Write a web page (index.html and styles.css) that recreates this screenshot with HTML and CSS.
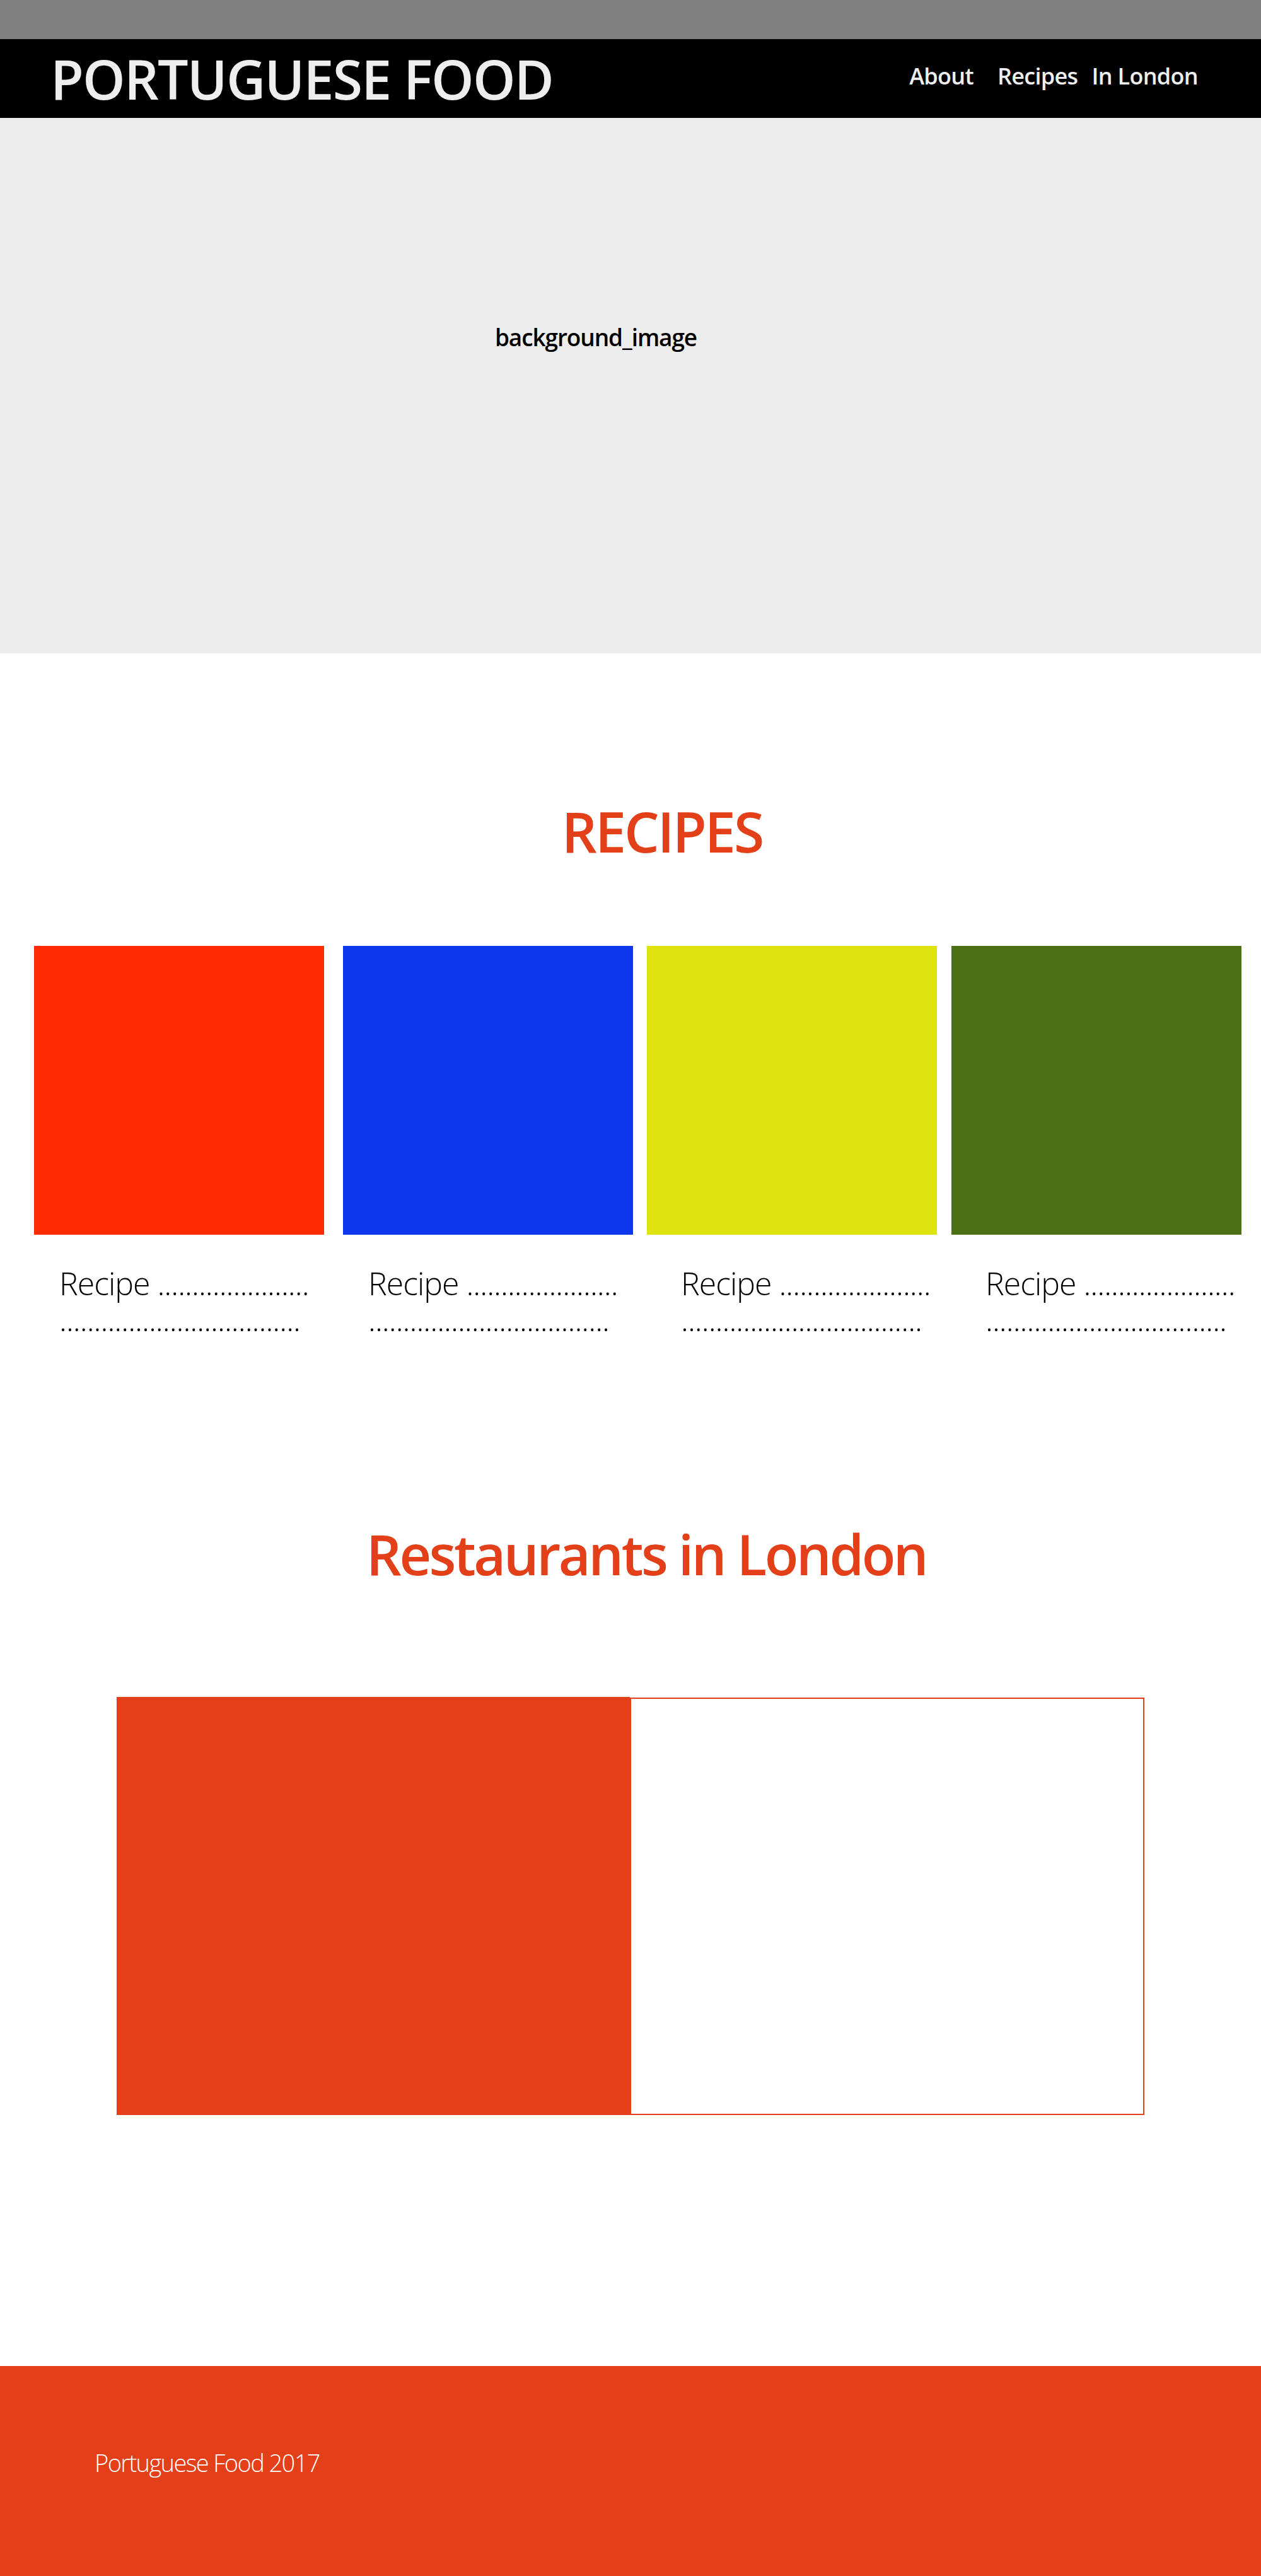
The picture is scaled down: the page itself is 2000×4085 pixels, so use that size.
FILE: index.html
```html
<!DOCTYPE html>
<html lang="en">
<head>
<meta charset="utf-8">
<title>Portuguese Food</title>
<link rel="stylesheet" href="styles.css">
</head>
<body>
<div class="topbar"></div>
<header class="header">
  <h1 class="logo">PORTUGUESE FOOD</h1>
  <nav class="nav">
    <a class="nav-link nav-about" href="#about">About</a>
    <a class="nav-link nav-recipes" href="#recipes">Recipes</a>
    <a class="nav-link nav-london" href="#london">In London</a>
  </nav>
</header>
<section class="hero" id="about">
  <p class="hero-text">background_image</p>
</section>
<section class="recipes" id="recipes">
  <h2 class="section-title recipes-title">RECIPES</h2>
  <div class="cards">
    <div class="card">
      <div class="swatch swatch-red"></div>
      <p class="card-text">Recipe ......................<br>...................................</p>
    </div>
    <div class="card">
      <div class="swatch swatch-blue"></div>
      <p class="card-text">Recipe ......................<br>...................................</p>
    </div>
    <div class="card">
      <div class="swatch swatch-yellow"></div>
      <p class="card-text">Recipe ......................<br>...................................</p>
    </div>
    <div class="card">
      <div class="swatch swatch-green"></div>
      <p class="card-text">Recipe ......................<br>...................................</p>
    </div>
  </div>
</section>
<section class="london" id="london">
  <h2 class="section-title london-title">Restaurants in London</h2>
  <div class="restaurant">
    <div class="restaurant-fill"></div>
    <div class="restaurant-panel"></div>
  </div>
</section>
<footer class="footer">
  <p class="footer-text">Portuguese Food 2017</p>
</footer>
</body>
</html>
```
FILE: styles.css
```css
* { box-sizing: border-box; }
html, body { margin: 0; padding: 0; }
body {
  font-family: "Open Sans", "Noto Sans", sans-serif;
  background: #ffffff;
  width: 2000px;
}
.topbar {
  height: 62px;
  background: #808080;
}
.header {
  height: 125px;
  background: #000000;
  display: flex;
  align-items: center;
  justify-content: space-between;
  padding: 0 100px 0 80px;
}
.logo {
  margin: 0;
  font-size: 86px;
  line-height: 1;
  font-weight: 600;
  color: #eeeeee;
  letter-spacing: -1.8px;
}
.nav {
  display: flex;
  padding-bottom: 7px;
}
.nav-link {
  font-size: 36px;
  line-height: 1;
  font-weight: 600;
  color: #eeeeee;
  text-decoration: none;
  letter-spacing: -0.7px;
}
.nav-recipes { margin-left: 38px; }
.nav-london { margin-left: 22px; }
.hero {
  height: 849px;
  background: #ededed;
  padding: 329px 110px 0 0;
  text-align: center;
}
.hero-text {
  margin: 0;
  font-size: 37px;
  line-height: 1;
  font-weight: 600;
  color: #000000;
  letter-spacing: -1.1px;
}
.recipes {
  padding-top: 238px;
}
.section-title {
  margin: 0;
  font-size: 88px;
  line-height: 1;
  font-weight: 600;
  color: #e33f18;
  text-align: center;
  letter-spacing: -3px;
}
.recipes-title { padding-left: 100px; }
.london-title { padding-left: 50px; letter-spacing: -3.5px; }
.cards {
  display: flex;
  margin-top: 138px;
  padding-left: 54px;
}
.card { width: 460px; }
.card:nth-child(2) { margin-left: 30px; }
.card:nth-child(3) { margin-left: 22px; }
.card:nth-child(4) { margin-left: 23px; }
.swatch { height: 458px; }
.swatch-red { background: #ff2a00; }
.swatch-blue { background: #0d36ed; }
.swatch-yellow { background: #dee20e; }
.swatch-green { background: #4b7114; }
.card-text {
  margin: 49px 0 0;
  font-size: 50px;
  line-height: 57px;
  font-weight: 300;
  color: #000000;
  letter-spacing: -1px;
  white-space: nowrap;
  padding-left: 40px;
}
.card:nth-child(3) .card-text,
.card:nth-child(4) .card-text { padding-left: 54px; }
.london {
  padding-top: 299px;
}
.restaurant {
  display: flex;
  margin: 183px 0 0 185px;
  width: 1630px;
  height: 663px;
}
.restaurant-fill {
  width: 814px;
  background: #e33f18;
}
.restaurant-panel {
  flex: 1;
  margin-top: 1px;
  border: 2px solid #e33f18;
  background: #ffffff;
}
.footer {
  margin-top: 398px;
  height: 333px;
  background: #e33f18;
  padding: 134px 0 0 150px;
}
.footer-text {
  margin: 0;
  font-size: 38px;
  line-height: 1;
  font-weight: 300;
  color: #ffffff;
  letter-spacing: -1.6px;
}
```
